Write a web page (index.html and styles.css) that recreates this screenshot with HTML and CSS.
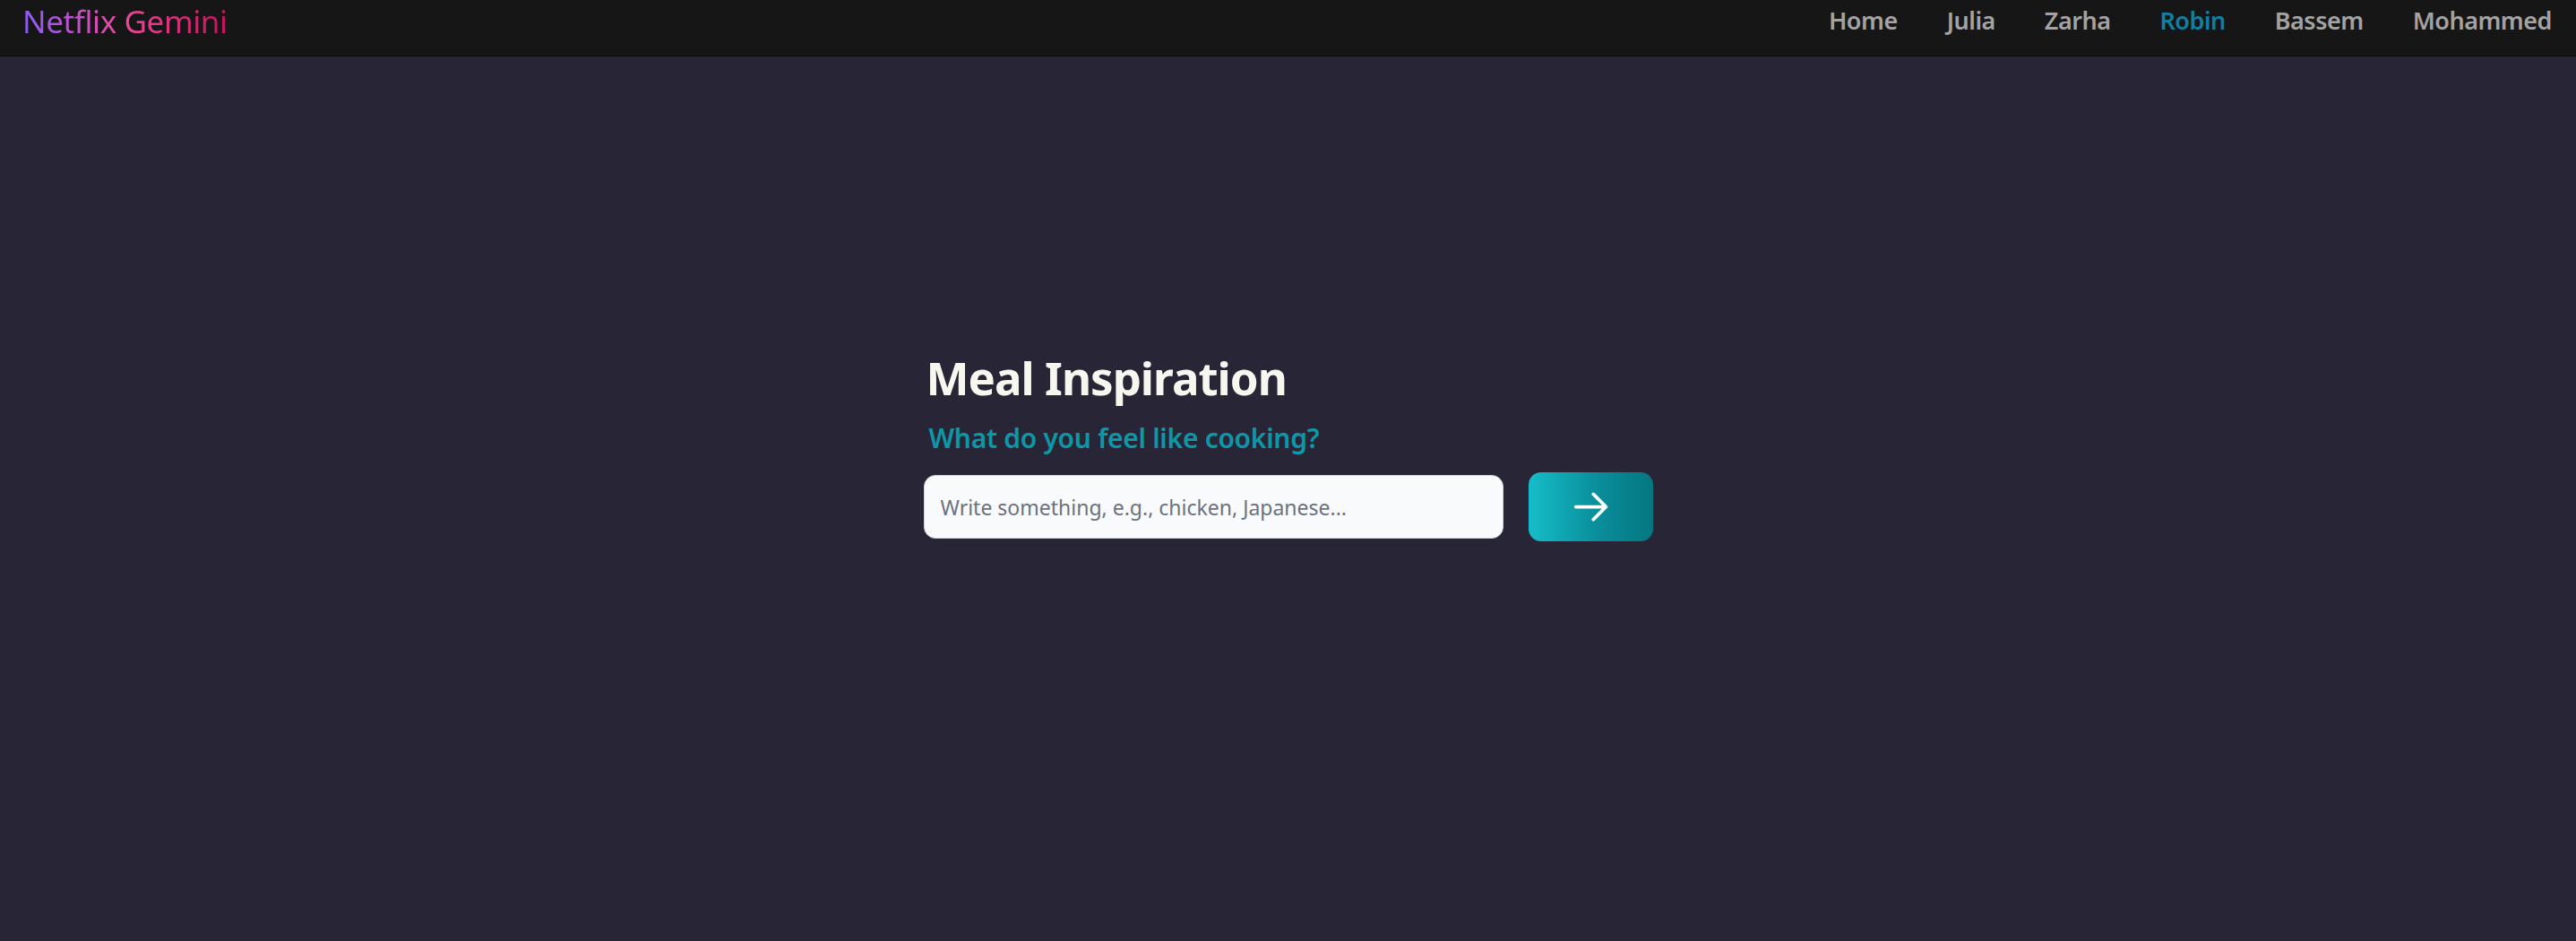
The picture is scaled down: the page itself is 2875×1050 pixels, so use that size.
FILE: index.html
```html
<!DOCTYPE html>
<html lang="en">
<head>
<meta charset="utf-8">
<title>Netflix Gemini</title>
<link rel="stylesheet" href="styles.css">
</head>
<body>
<header class="navbar">
  <a class="brand" href="#">Netflix Gemini</a>
  <nav class="nav-links">
    <a class="nav-link" href="#">Home</a>
    <a class="nav-link" href="#">Julia</a>
    <a class="nav-link" href="#">Zarha</a>
    <a class="nav-link active" href="#">Robin</a>
    <a class="nav-link" href="#">Bassem</a>
    <a class="nav-link" href="#">Mohammed</a>
  </nav>
</header>
<main class="main">
  <section class="hero">
    <h1 class="title">Meal Inspiration</h1>
    <h2 class="subtitle">What do you feel like cooking?</h2>
    <form class="search" onsubmit="return false">
      <input class="search-input" type="text" placeholder="Write something, e.g., chicken, Japanese...">
      <button class="search-btn" type="submit" aria-label="Search">
        <svg class="arrow" viewBox="0 0 24 24" fill="none" stroke="currentColor" stroke-width="2" stroke-linecap="round" stroke-linejoin="round"><path d="M13.5 4.5 21 12m0 0-7.5 7.5M21 12H3"/></svg>
      </button>
    </form>
  </section>
</main>
</body>
</html>
```
FILE: styles.css
```css
* { box-sizing: border-box; }
html, body { margin: 0; padding: 0; height: 100%; }
body {
  background: #282636;
  font-family: "Noto Sans", "Open Sans", sans-serif;
  min-height: 100vh;
  display: flex;
  flex-direction: column;
}
.navbar {
  height: 63px;
  background: #161616;
  border-bottom: 1px solid #050505;
  display: flex;
  align-items: flex-start;
  justify-content: space-between;
  padding: 0 27px 0 25px;
  flex-shrink: 0;
}
.brand {
  font-size: 35px;
  line-height: 48px;
  text-decoration: none;
  background: linear-gradient(90deg, #8b5cf6 0%, #ec4899 50%, #c0145c 100%);
  -webkit-background-clip: text;
  background-clip: text;
  color: transparent;
  letter-spacing: -0.4px;
}
.nav-links {
  display: flex;
  gap: 55px;
}
.nav-link {
  font-size: 27px;
  font-weight: 600;
  line-height: 46px;
  color: #a3a3a3;
  text-decoration: none;
  letter-spacing: -0.5px;
}
.nav-link.active { color: #127fa0; }
.main {
  flex: 1;
  display: flex;
  justify-content: center;
  padding-top: 326px;
}
.hero {
  width: 814px;
  display: flex;
  flex-direction: column;
}
.title {
  margin: 0 0 0 3px;
  font-size: 51px;
  font-weight: 700;
  line-height: 64px;
  color: #f7f7f0;
  letter-spacing: -1px;
}
.subtitle {
  margin: 16px 0 0 6px;
  font-size: 30px;
  font-weight: 600;
  line-height: 40px;
  color: #0e97a6;
  letter-spacing: -0.3px;
}
.search {
  margin-top: 18px;
  display: flex;
  align-items: center;
  gap: 28px;
}
.search-input {
  width: 647px;
  height: 71px;
  border: 1px solid #cfd3da;
  border-radius: 13px;
  background: #f8fafc;
  padding: 0 18px;
  font-family: inherit;
  font-size: 23px;
  color: #1f2937;
  outline: none;
}
.search-input::placeholder { color: #6b7280; }
.search-btn {
  width: 139px;
  height: 77px;
  border: none;
  border-radius: 14px;
  background: linear-gradient(90deg, #15bdc9 0%, #0a8e9b 55%, #047780 100%);
  color: #fff;
  display: flex;
  align-items: center;
  justify-content: center;
  padding: 0;
  cursor: pointer;
}
.arrow { width: 45px; height: 45px; }
```
